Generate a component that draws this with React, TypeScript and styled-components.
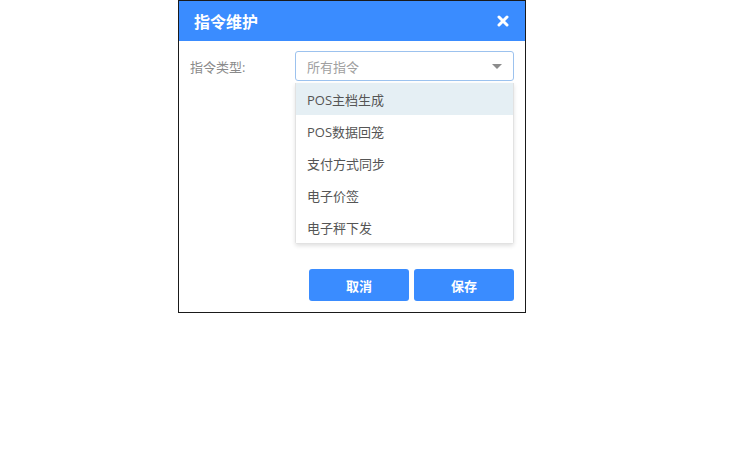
import { useState } from 'react';
import styled, { createGlobalStyle } from 'styled-components';

const GlobalStyle = createGlobalStyle`
  html, body {
    margin: 0;
    padding: 0;
    background: #fff;
    font-family: "Open Sans", "Noto Sans CJK SC", sans-serif;
  }
`;

const commands = ['POS主档生成', 'POS数据回笼', '支付方式同步', '电子价签', '电子秤下发'];

const App = () => {
  const [hovered, setHovered] = useState(0);

  return (
    <>
      <GlobalStyle />
      <Page>
        <Dialog>
          <Header>
            <Title>指令维护</Title>
            <CloseBtn aria-label="关闭">
              <svg width="12" height="12" viewBox="0 0 12 12">
                <path d="M2 2 L10 10 M10 2 L2 10" stroke="#fff" strokeWidth="3" strokeLinecap="round" />
              </svg>
            </CloseBtn>
          </Header>
          <Body>
            <FormRow>
              <Label>指令类型:</Label>
              <SelectWrap>
                <Select>
                  <Placeholder>所有指令</Placeholder>
                  <Caret />
                </Select>
                <Menu>
                  {commands.map((cmd, i) => (
                    <Option key={cmd} $active={hovered === i} onMouseEnter={() => setHovered(i)}>
                      {cmd}
                    </Option>
                  ))}
                </Menu>
              </SelectWrap>
            </FormRow>
          </Body>
          <Footer>
            <Button>取消</Button>
            <Button>保存</Button>
          </Footer>
        </Dialog>
      </Page>
    </>
  );
};

const Page = styled.div`
  display: flex;
  padding-left: 178px;
`;

const Dialog = styled.div`
  width: 348px;
  height: 313px;
  box-sizing: border-box;
  border: 1px solid #1a1a1a;
  display: flex;
  flex-direction: column;
  background: #fff;
`;

const Header = styled.div`
  height: 40px;
  background: #3a8cff;
  display: flex;
  align-items: center;
  justify-content: space-between;
  padding: 0 16px 0 15px;
`;

const Title = styled.div`
  color: #fff;
  font-size: 16px;
  font-weight: bold;
  font-family: "Noto Sans CJK SC", sans-serif;
`;

const CloseBtn = styled.button`
  border: none;
  background: none;
  padding: 0;
  display: flex;
  cursor: pointer;
`;

const Body = styled.div`
  flex: 1;
  padding: 10px 11px 0 11px;
`;

const FormRow = styled.div`
  display: flex;
  align-items: center;
  height: 30px;
`;

const Label = styled.div`
  width: 105px;
  font-size: 13px;
  color: #8a8a8a;
`;

const SelectWrap = styled.div`
  position: relative;
  width: 219px;
`;

const Select = styled.div`
  height: 30px;
  box-sizing: border-box;
  border: 1px solid #9cc2ee;
  border-radius: 3px;
  display: flex;
  align-items: center;
  justify-content: space-between;
  padding: 0 11px 0 11px;
`;

const Placeholder = styled.span`
  font-size: 13px;
  color: #a0a0a0;
`;

const Caret = styled.span`
  width: 0;
  height: 0;
  border-left: 5px solid transparent;
  border-right: 5px solid transparent;
  border-top: 5px solid #8c8c8c;
`;

const Menu = styled.ul`
  position: absolute;
  top: 32px;
  left: 0;
  right: 0;
  margin: 0;
  padding: 0;
  list-style: none;
  background: #fff;
  border: 1px solid #e2e2e2;
  border-top: none;
  box-shadow: 0 2px 4px rgba(0, 0, 0, 0.12);
  border-radius: 0 0 3px 3px;
`;

const Option = styled.li<{ $active: boolean }>`
  height: 32px;
  display: flex;
  align-items: center;
  padding-left: 11px;
  font-size: 13px;
  color: #555;
  background: ${(p) => (p.$active ? '#e5eff4' : '#fff')};
`;

const Footer = styled.div`
  display: flex;
  justify-content: flex-end;
  gap: 5px;
  padding: 0 11px 11px 0;
`;

const Button = styled.button`
  width: 100px;
  height: 32px;
  border: none;
  border-radius: 3px;
  background: #3a8cff;
  color: #fff;
  font-size: 13px;
  font-weight: bold;
  font-family: "Noto Sans CJK SC", sans-serif;
  cursor: pointer;
`;

export default App;
